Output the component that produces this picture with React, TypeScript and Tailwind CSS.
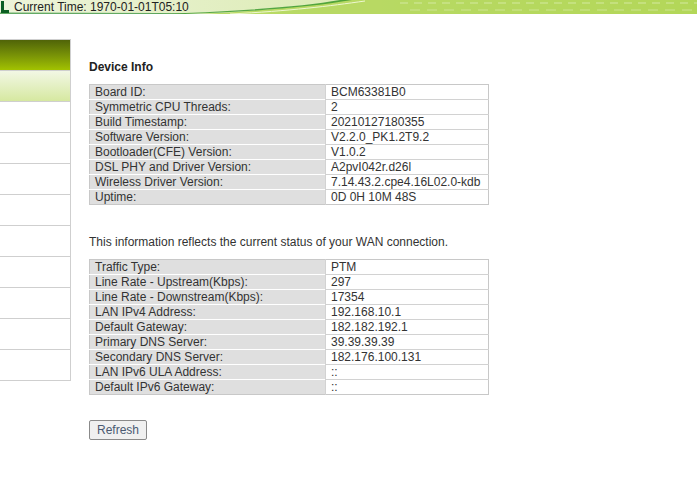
import React from 'react'

const deviceRows: [string, string][] = [
  ['Board ID:', 'BCM63381B0'],
  ['Symmetric CPU Threads:', '2'],
  ['Build Timestamp:', '20210127180355'],
  ['Software Version:', 'V2.2.0_PK1.2T9.2'],
  ['Bootloader(CFE) Version:', 'V1.0.2'],
  ['DSL PHY and Driver Version:', 'A2pvI042r.d26l'],
  ['Wireless Driver Version:', '7.14.43.2.cpe4.16L02.0-kdb'],
  ['Uptime:', '0D 0H 10M 48S'],
]

const wanRows: [string, string][] = [
  ['Traffic Type:', 'PTM'],
  ['Line Rate - Upstream(Kbps):', '297'],
  ['Line Rate - Downstream(Kbps):', '17354'],
  ['LAN IPv4 Address:', '192.168.10.1'],
  ['Default Gateway:', '182.182.192.1'],
  ['Primary DNS Server:', '39.39.39.39'],
  ['Secondary DNS Server:', '182.176.100.131'],
  ['LAN IPv6 ULA Address:', '::'],
  ['Default IPv6 Gateway:', '::'],
]

function InfoTable({ rows }: { rows: [string, string][] }) {
  return (
    <table className="w-[400px] border-collapse border border-[#c8c8c8] text-[12px] leading-[14px]">
      <tbody>
        {rows.map(([k, v], i) => (
          <tr key={i} className="h-[15px]">
            <td className={`w-[236px] bg-[#dfdfdf] pl-[5px] py-0 ${i > 0 ? 'border-t border-white' : ''}`}>{k}</td>
            <td className={`pl-[5px] py-0 border-l border-[#d2d2d2] ${i > 0 ? 'border-t' : ''}`}>{v}</td>
          </tr>
        ))}
      </tbody>
    </table>
  )
}

export default function App() {
  return (
    <div className="w-[697px] h-[489px] bg-white text-[#333] overflow-hidden" style={{ fontFamily: '"Liberation Sans", Arial, sans-serif' }}>
      {/* banner strip */}
      <div className="relative h-[14px] bg-gradient-to-r from-[#edf4da] via-[#dcebb4] to-[#bcdb68] overflow-hidden">
        <svg className="absolute inset-0" width="697" height="14" viewBox="0 0 697 14" preserveAspectRatio="none">
          <path d="M200 14 C260 11 310 6 345 0 L697 0 L697 14 Z" fill="#b2d656" opacity="0.85" />
          <path d="M150 14 C230 12 300 7 340 0 L352 0 C310 7 250 12 185 14 Z" fill="#3c9a2e" opacity="0.85" />
          <path d="M230 14 C290 11 330 6 365 1" stroke="#eef7d0" strokeWidth="1" fill="none" />
          <path d="M0 12.5 L160 13 L190 14 L0 14 Z" fill="#2a8a34" opacity="0.7" />
          <path d="M400 3 L697 3" stroke="#d4eaa0" strokeWidth="2" strokeDasharray="8 6" opacity="0.5" />
          <path d="M410 10 L697 10" stroke="#d4eaa0" strokeWidth="2" strokeDasharray="10 7" opacity="0.4" />
        </svg>
        <div className="relative flex items-center h-[14px]">
          <span className="w-[3px] h-[12px] bg-[#0b5e22] ml-[1px]" />
          <span className="w-[5px] h-[3px] bg-[#0b5e22] self-end mb-[1px]" />
          <span className="ml-[5px] text-[12px] leading-[14px] text-[#222]">Current Time: 1970-01-01T05:10</span>
        </div>
      </div>

      <div className="flex">
        {/* sidebar */}
        <div className="w-[71px] mt-[25px] border-r border-t border-[#cfcfcf] self-start">
          <div className="h-[31px] bg-gradient-to-b from-[#506408] to-[#a2c200] border-b border-[#cfcfcf]" />
          <div className="h-[31px] bg-gradient-to-b from-[#f2f7e4] to-[#d6e8a0] border-b border-[#cfcfcf]" />
          {Array.from({ length: 9 }).map((_, i) => (
            <div key={i} className="h-[31px] border-b border-[#cfcfcf]" />
          ))}
        </div>

        {/* main */}
        <div className="ml-[18px] pt-[46px]">
          <h2 className="text-[12px] font-bold leading-[14px] text-[#222]">Device Info</h2>
          <div className="mt-[10px]">
            <InfoTable rows={deviceRows} />
          </div>
          <p className="mt-[30px] text-[12px] leading-[14px]">This information reflects the current status of your WAN connection.</p>
          <div className="mt-[10px]">
            <InfoTable rows={wanRows} />
          </div>
          <button className="mt-[25px] h-[20px] px-[7px] text-[12px] leading-[14px] text-[#4a5a72] bg-[#f0f0f0] border border-[#8a8a8a] rounded-[2px]">
            Refresh
          </button>
        </div>
      </div>
    </div>
  )
}
